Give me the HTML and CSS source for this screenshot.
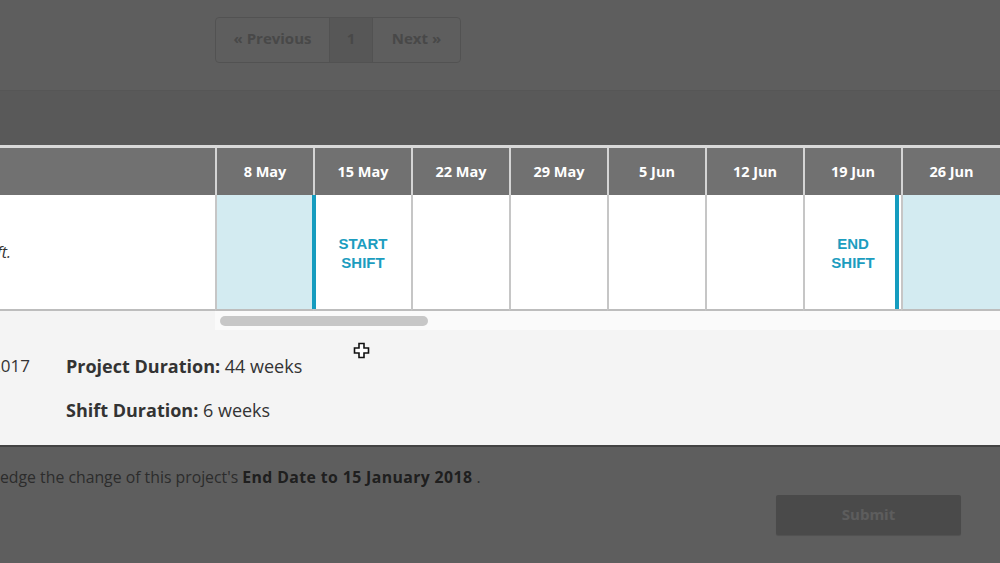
FILE: index.html
```html
<!DOCTYPE html>
<html lang="en">
<head>
<meta charset="utf-8">
<title>Shift timeline</title>
<link rel="stylesheet" href="styles.css">
</head>
<body>
<div class="page">
  <nav class="pager-bar">
    <div class="pager">
      <span class="pg pg-prev">« Previous</span>
      <span class="pg pg-num">1</span>
      <span class="pg pg-next">Next »</span>
    </div>
  </nav>
  <div class="band"></div>

  <section class="timeline">
    <div class="grid">
      <div class="th th-task"></div>
      <div class="th">8 May</div>
      <div class="th">15 May</div>
      <div class="th">22 May</div>
      <div class="th">29 May</div>
      <div class="th">5 Jun</div>
      <div class="th">12 Jun</div>
      <div class="th">19 Jun</div>
      <div class="th">26 Jun</div>

      <div class="td td-task"><span class="task-text">Drag the markers to adjust the shift.</span></div>
      <div class="td td-blue"></div>
      <div class="td td-start"><span class="mark">START<br>SHIFT</span></div>
      <div class="td"></div>
      <div class="td"></div>
      <div class="td"></div>
      <div class="td"></div>
      <div class="td td-end"><span class="mark">END<br>SHIFT</span></div>
      <div class="td td-blue"></div>

      <div class="scroll-left"></div>
      <div class="scroll-track"><div class="thumb"></div></div>
    </div>

    <div class="info">
      <div class="info-cut"><span class="nowrap">Start Date: 8 May 2017</span></div>
      <div><b>Project Duration:</b> 44 weeks</div>
      <div></div>
      <div><b>Shift Duration:</b> 6 weeks</div>
    </div>
  </section>

  <p class="ack"><span class="ack-cut"><span class="nowrap">Please acknowl</span></span><span class="ack-text">edge the change of this project's <b>End Date to 15 January 2018</b> .</span></p>

  <div class="actions"><button class="submit" type="button">Submit</button></div>
</div>

<div class="spot"></div>
<svg class="cursor" width="17" height="17" viewBox="0 0 17 17">
  <path d="M6 1.5h5v4.5h4.5v5H11v4.5H6V11H1.5V6H6z" fill="#fff" stroke="#111" stroke-width="1.6" stroke-linejoin="miter"/>
</svg>
</body>
</html>
```

FILE: styles.css
```css
html, body {
  margin: 0;
  padding: 0;
}
body {
  width: 1000px;
  height: 563px;
  overflow: hidden;
  position: relative;
  background: #fff;
  font-family: "Open Sans", "Lato", sans-serif;
  color: #333;
}
.page {
  width: 1000px;
}
.nowrap { white-space: nowrap; }

/* pager */
.pager-bar {
  height: 90px;
  box-sizing: border-box;
  padding: 17px 0 0 215px;
}
.pager {
  display: inline-flex;
  height: 44px;
  border: 1px solid #dedede;
  border-radius: 4px;
  overflow: hidden;
}
.pg {
  display: flex;
  align-items: center;
  justify-content: center;
  padding-bottom: 4px;
  box-sizing: border-box;
  font-size: 15px;
  font-weight: 700;
  color: #c4c4c4;
}
.pg-prev { width: 114px; border-right: 1px solid #dedede; }
.pg-num { width: 43px; background: #ececec; border-right: 1px solid #dedede; }
.pg-next { width: 87px; }

.band {
  height: 55px;
  background: #f2f2f2;
  border-top: 1px solid #e8e8e8;
  box-sizing: border-box;
}

/* timeline */
.timeline {
  border-top: 3px solid #d9d9d9;
}
.grid {
  display: grid;
  grid-template-columns: 215px repeat(7, 98px) 99px;
}
.th {
  height: 47px;
  background: #717171;
  border-left: 2px solid #d4d4d4;
  color: #fff;
  font-size: 14.5px;
  font-weight: 700;
  display: flex;
  align-items: center;
  justify-content: center;
}
.th-task { border-left: 0; }
.td {
  position: relative;
  height: 116px;
  box-sizing: border-box;
  background: #fff;
  border-left: 2px solid #c6c6c6;
  border-bottom: 2px solid #bdbdbd;
  display: flex;
  align-items: center;
  justify-content: center;
}
.td-task {
  border-left: 0;
  justify-content: flex-end;
  padding-right: 204px;
}
.task-text {
  white-space: nowrap;
  font-style: italic;
  font-size: 16px;
  color: #333;
}
.td-blue { background: #d3ebf1; }
.mark {
  font-family: "Liberation Sans", Arial, sans-serif;
  font-weight: 700;
  font-size: 15px;
  line-height: 19px;
  padding-top: 1px;
  color: #1c9dbf;
  text-align: center;
}
.td-start::before,
.td-end::after {
  content: "";
  position: absolute;
  top: 0;
  bottom: 0;
  width: 4px;
  background: #159cbf;
}
.td-start::before { left: -3px; }
.td-end::after { right: 2px; }

.scroll-left {
  height: 19px;
  background: #f4f4f4;
}
.scroll-track {
  grid-column: 2 / span 8;
  height: 19px;
  box-sizing: border-box;
  padding: 5px 0 0 5px;
  background: #fafafa;
}
.thumb {
  width: 208px;
  height: 10px;
  border-radius: 5px;
  background: #c7c7c7;
}

.info {
  background: #f4f4f4;
  display: grid;
  grid-template-columns: 30px auto;
  column-gap: 36px;
  row-gap: 20px;
  padding: 24px 0 23px;
  font-size: 18px;
  line-height: 24px;
  color: #333;
}
.info-cut { font-size: 17px; }
.info b { font-weight: 700; }
.info-cut {
  display: flex;
  justify-content: flex-end;
}

/* acknowledgement */
.ack {
  margin: 0;
  border-top: 2px solid #b5b5b5;
  padding-top: 18px;
  display: flex;
  font-size: 15.8px;
  line-height: 24px;
  color: #787878;
}
.ack b { color: #545454; font-weight: 700; letter-spacing: 0.4px; }
.ack-cut {
  width: 0;
  display: flex;
  justify-content: flex-end;
}
.ack-text { white-space: nowrap; }

.actions {
  display: flex;
  justify-content: flex-end;
  padding-right: 39px;
  margin-top: 6px;
}
.submit {
  width: 185px;
  height: 40px;
  padding: 0 0 2px;
  border: 0;
  border-radius: 2px;
  background: #c8c8c8;
  color: #fbfbfb;
  font-family: "Open Sans", sans-serif;
  font-weight: 700;
  font-size: 15px;
  box-shadow: 0 1px 1px rgba(0,0,0,0.15);
}

/* spotlight overlay */
.spot {
  position: absolute;
  left: 0;
  top: 145px;
  width: 1000px;
  height: 300px;
  box-shadow: 0 0 0 2000px rgba(0,0,0,0.63);
  pointer-events: none;
}
.cursor {
  position: absolute;
  left: 353px;
  top: 342px;
}
```
